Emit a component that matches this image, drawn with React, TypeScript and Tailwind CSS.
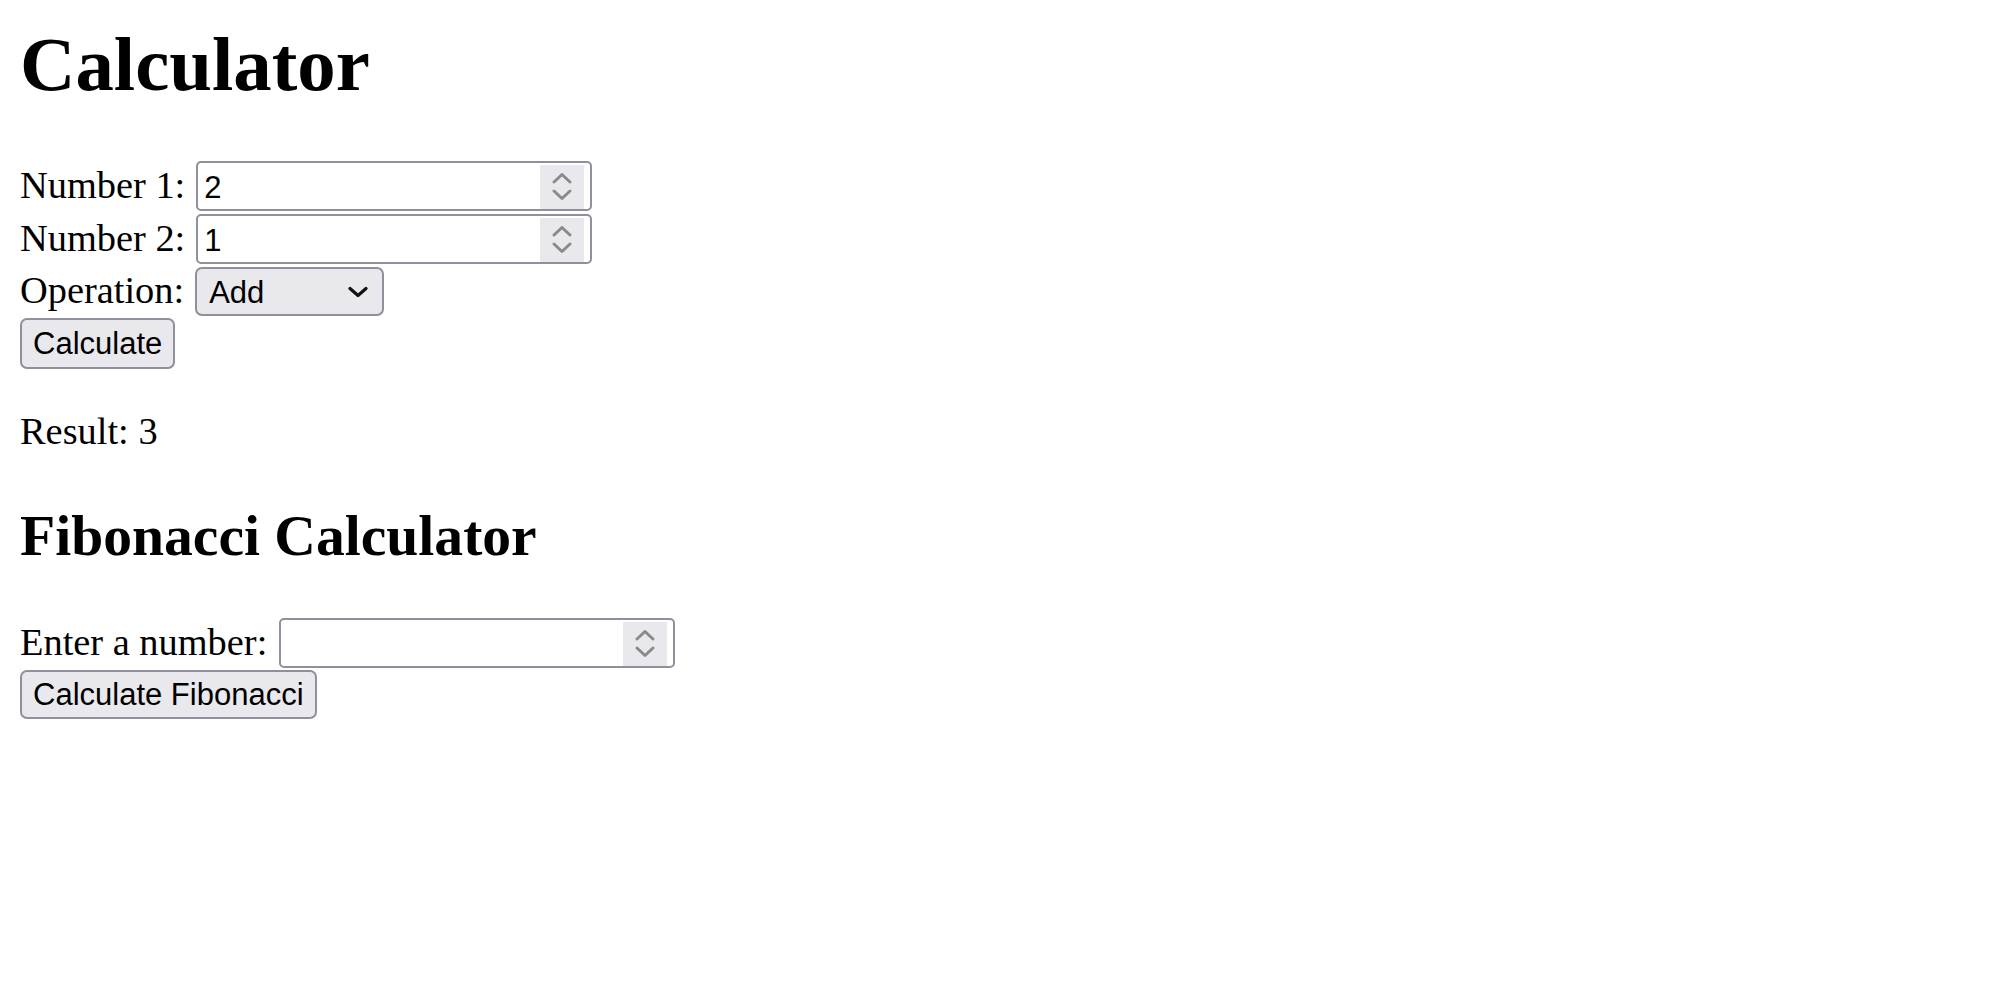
import { useState } from 'react';

const serif = "font-['Liberation_Serif','Times_New_Roman',serif]";
const control = "font-['Tahoma','Liberation_Sans',Arial,sans-serif] text-[31px] text-black";

function Spinner(): React.JSX.Element {
  return (
    <div className="w-[44px] h-[44px] bg-[#e9e9ed] shrink-0 flex items-center justify-center mt-[2px]">
      <svg width="44" height="44" viewBox="0 0 44 44" fill="none" stroke="#8a8a8e" strokeWidth="3" strokeLinecap="round" strokeLinejoin="round">
        <path d="M14 17 L22 9.5 L30 17" />
        <path d="M14 26 L22 33.5 L30 26" />
      </svg>
    </div>
  );
}

function NumberField({ value, onChange }: { value: string; onChange: (v: string) => void }): React.JSX.Element {
  return (
    <div className="flex items-start w-[396px] h-[50px] border-2 border-[#8f8f9d] rounded-[5px] bg-white pr-[6px]">
      <input
        type="text"
        inputMode="numeric"
        value={value}
        onChange={(e) => onChange(e.target.value)}
        className={`${control} flex-1 min-w-0 h-[46px] pt-[4px] pl-[6px] bg-transparent outline-none`}
      />
      <Spinner />
    </div>
  );
}

export default function App(): React.JSX.Element {
  const [num1, setNum1] = useState('2');
  const [num2, setNum2] = useState('1');
  const [op, setOp] = useState('add');
  const [fib, setFib] = useState('');

  return (
    <div className={`${serif} text-black bg-white min-h-screen pl-[20px] pt-[21px]`}>
      <h1 className="text-[76.8px] font-bold leading-[88px]">Calculator</h1>

      <div className="flex flex-col items-start mt-[52px] text-[38.4px] leading-[44px]">
        <div className="flex items-baseline gap-[11px]">
          <span>Number 1:</span>
          <NumberField value={num1} onChange={setNum1} />
        </div>
        <div className="flex items-baseline gap-[11px] mt-[3px]">
          <span>Number 2:</span>
          <NumberField value={num2} onChange={setNum2} />
        </div>
        <div className="flex items-baseline gap-[11px] mt-[3px]">
          <span>Operation:</span>
          <div className="flex items-center w-[189px] h-[49px] border-2 border-[#8f8f9d] rounded-[7px] bg-[#e9e9ed] pr-[14px]">
            <select
              value={op}
              onChange={(e) => setOp(e.target.value)}
              className={`${control} appearance-none flex-1 min-w-0 h-full pl-[12px] pt-[2px] bg-transparent outline-none`}
            >
              <option value="add">Add</option>
              <option value="subtract">Subtract</option>
              <option value="multiply">Multiply</option>
              <option value="divide">Divide</option>
            </select>
            <svg width="20" height="12" viewBox="0 0 20 12" fill="none" stroke="#111" strokeWidth="3.2" strokeLinecap="round" strokeLinejoin="round">
              <path d="M2 2.5 L10 9.5 L18 2.5" />
            </svg>
          </div>
        </div>
        <button className={`${control} mt-[2px] h-[51px] px-[11px] border-2 border-[#8f8f9d] rounded-[7px] bg-[#e9e9ed]`}>
          Calculate
        </button>
      </div>

      <p className="text-[38.4px] leading-[44px] mt-[40px]">Result: 3</p>

      <h2 className="text-[57.6px] font-bold leading-[66px] mt-[50px]">Fibonacci Calculator</h2>

      <div className="flex flex-col items-start mt-[49px] text-[38.4px] leading-[44px]">
        <div className="flex items-baseline gap-[12px]">
          <span>Enter a number:</span>
          <NumberField value={fib} onChange={setFib} />
        </div>
        <button className={`${control} mt-[2px] h-[49px] px-[11px] border-2 border-[#8f8f9d] rounded-[7px] bg-[#e9e9ed]`}>
          Calculate Fibonacci
        </button>
      </div>
    </div>
  );
}
